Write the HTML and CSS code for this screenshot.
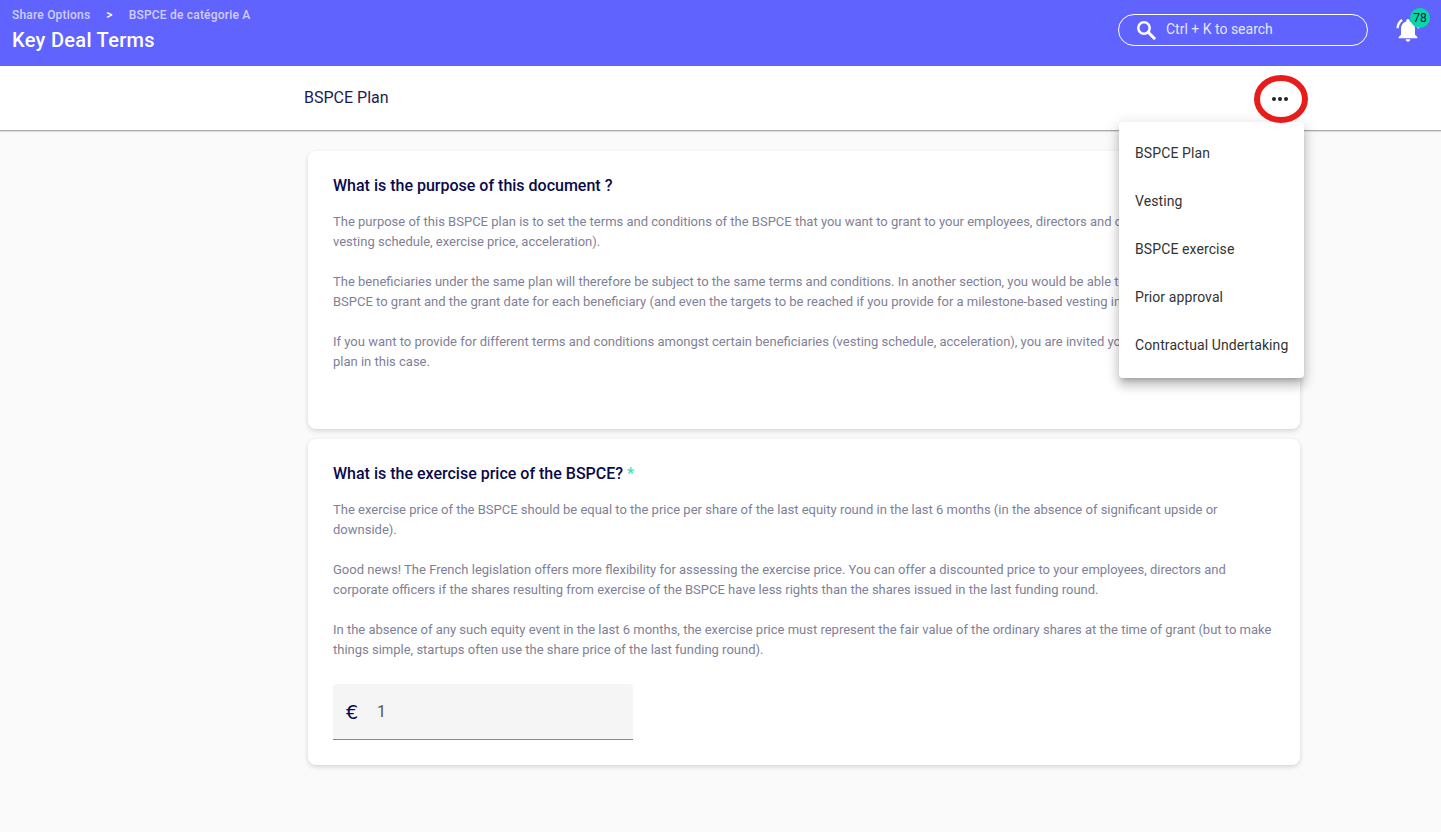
FILE: index.html
```html
<!DOCTYPE html>
<html lang="en">
<head>
<meta charset="UTF-8">
<meta name="viewport" content="width=device-width, initial-scale=1.0">
<title>Key Deal Terms</title>
<link rel="stylesheet" href="styles.css">
</head>
<body>

<header class="topbar">
  <div class="topbar-left">
    <div class="crumbs">
      <span>Share Options</span>
      <span class="crumb-sep">&gt;</span>
      <span>BSPCE de catégorie A</span>
    </div>
    <h1>Key Deal Terms</h1>
  </div>
  <div class="topbar-right">
    <div class="search">
      <svg class="search-icon" viewBox="0 0 20 20" width="20" height="20"><circle cx="8" cy="8" r="5.7" fill="none" stroke="#fff" stroke-width="2.5"/><path d="M12.2 12.2 18.2 18.2" stroke="#fff" stroke-width="3" stroke-linecap="round"/></svg>
      <span>Ctrl + K to search</span>
    </div>
    <div class="bell">
      <svg viewBox="0 0 24 24" width="28" height="28"><path fill="#fff" d="M12 22c1.1 0 2-.9 2-2h-4c0 1.1.9 2 2 2zm6-6v-5c0-3.07-1.63-5.64-4.5-6.32V4c0-.83-.67-1.5-1.5-1.5s-1.5.67-1.5 1.5v.68C7.64 5.36 6 7.92 6 11v5l-2 2v1h16v-1l-2-2zM7.58 4.08 6.15 2.65C3.75 4.48 2.17 7.3 2.03 10.5h2c.15-2.65 1.51-4.97 3.55-6.42zM19.97 10.5h2c-.15-3.2-1.73-6.02-4.12-7.85l-1.42 1.43c2.02 1.45 3.39 3.77 3.54 6.42z"/></svg>
      <span class="badge">78</span>
    </div>
  </div>
</header>

<div class="subbar">
  <div class="subbar-title">BSPCE Plan</div>
  <div class="more">
    <svg viewBox="0 0 18 6" width="18" height="6"><circle cx="3" cy="3" r="2" fill="#222"/><circle cx="9" cy="3" r="2" fill="#222"/><circle cx="15" cy="3" r="2" fill="#222"/></svg>
    <span class="red-ring"></span>
  </div>
</div>

<ul class="menu">
  <li>BSPCE Plan</li>
  <li>Vesting</li>
  <li>BSPCE exercise</li>
  <li>Prior approval</li>
  <li>Contractual Undertaking</li>
</ul>

<main class="content">
  <section class="card card-purpose">
    <h2>What is the purpose of this document ?</h2>
    <p>The purpose of this BSPCE plan is to set the terms and conditions of the BSPCE that you want to grant to your employees, directors and corporate officers (e.g. vesting schedule, exercise price, acceleration).</p>
    <p>The beneficiaries under the same plan will therefore be subject to the same terms and conditions. In another section, you would be able to define the number of BSPCE to grant and the grant date for each beneficiary (and even the targets to be reached if you provide for a milestone-based vesting in the plan).</p>
    <p>If you want to provide for different terms and conditions amongst certain beneficiaries (vesting schedule, acceleration), you are invited you to create a new separate<br>plan in this case.</p>
  </section>

  <section class="card">
    <h2>What is the exercise price of the BSPCE? <span class="req">*</span></h2>
    <p>The exercise price of the BSPCE should be equal to the price per share of the last equity round in the last 6 months (in the absence of significant upside or downside).</p>
    <p>Good news! The French legislation offers more flexibility for assessing the exercise price. You can offer a discounted price to your employees, directors and corporate officers if the shares resulting from exercise of the BSPCE have less rights than the shares issued in the last funding round.</p>
    <p>In the absence of any such equity event in the last 6 months, the exercise price must represent the fair value of the ordinary shares at the time of grant (but to make things simple, startups often use the share price of the last funding round).</p>
    <div class="field">
      <span class="field-prefix">€</span>
      <span class="field-value">1</span>
    </div>
  </section>
</main>

</body>
</html>
```
FILE: styles.css
```css
html, body { margin: 0; padding: 0; height: 100%; }
body { font-family: Roboto, Arial, sans-serif; background: #fafafa; color: #0a0a4a; position: relative; overflow: hidden; }

.topbar { height: 66px; background: #6163ff; color: #fff; display: flex; justify-content: space-between; box-sizing: border-box; padding: 0 19px 0 12px; }
.crumbs { display: flex; font-size: 12px; font-weight: 500; line-height: 14px; margin-top: 8px; letter-spacing: 0.2px; color: rgba(255, 255, 255, 0.7); }
.crumb-sep { margin: 0 16px; color: #fff; }
.topbar h1 { margin: 6px 0 0; font-size: 20px; font-weight: 500; line-height: 24px; letter-spacing: 0.3px; }
.topbar-right { display: flex; align-items: flex-start; }
.search { width: 250px; height: 32px; margin-top: 14px; box-sizing: border-box; border: 1px solid #fff; border-radius: 16px; display: flex; align-items: center; padding: 0 0 2px 17px; font-size: 14px; color: rgba(255, 255, 255, 0.85); }
.search-icon { margin: 1px 10px 0 0; }
.bell { position: relative; margin: 16px 0 0 26px; width: 28px; height: 28px; }
.badge { position: absolute; top: -8px; left: 16px; width: 20px; height: 20px; border-radius: 50%; background: #0ad6a5; color: #0a0a4a; font-size: 12px; line-height: 20px; text-align: center; }

.subbar { height: 64px; background: #fff; border-bottom: 1px solid #aaa; box-shadow: 0 1px 1px rgba(0, 0, 0, 0.1); display: flex; align-items: center; justify-content: space-between; padding: 0 152px 0 304px; }
.subbar-title { font-size: 16px; color: #1c1c54; margin-bottom: 2px; }
.more { position: relative; width: 18px; height: 6px; margin-top: 2px; display: flex; }
.red-ring { position: absolute; left: -17px; top: -21px; width: 54px; height: 48px; box-sizing: border-box; border: 6px solid #e91c1c; border-radius: 50%; z-index: 3; }

.menu { position: absolute; left: 1119px; top: 122px; width: 185px; margin: 0; padding: 8px 0; list-style: none; background: #fff; border-radius: 4px; box-shadow: 0 5px 5px -3px rgba(0,0,0,.2), 0 8px 10px 1px rgba(0,0,0,.14), 0 3px 14px 2px rgba(0,0,0,.12); z-index: 2; }
.menu li { height: 48px; line-height: 46px; padding-left: 16px; font-size: 14px; letter-spacing: 0.1px; color: #333; white-space: nowrap; }

.content { width: 992px; margin: 20px 0 0 308px; display: flex; flex-direction: column; gap: 10px; }
.card { background: #fff; border-radius: 8px; box-shadow: 0 2px 5px rgba(0,0,0,.15); padding: 24px 25px 25px; }
.card-purpose { padding-bottom: 57px; }
.card h2 { margin: 0 0 15px; font-size: 16px; font-weight: 500; line-height: 22px; color: #0a0a4a; }
.req { color: #3fe0b5; }
.card p { margin: 0 0 20px; font-size: 13px; line-height: 20px; color: #7f8199; }
.card p:last-of-type { margin-bottom: 0; }

.field { width: 300px; height: 56px; margin-top: 24px; box-sizing: border-box; background: #f5f5f5; border-bottom: 1px solid #888; border-radius: 4px 4px 0 0; display: flex; align-items: center; padding-left: 13px; }
.field-prefix { width: 31px; font-family: "DejaVu Sans", sans-serif; font-size: 19px; color: #0a0a4a; }
.field-value { font-size: 16px; color: #555; }
```
